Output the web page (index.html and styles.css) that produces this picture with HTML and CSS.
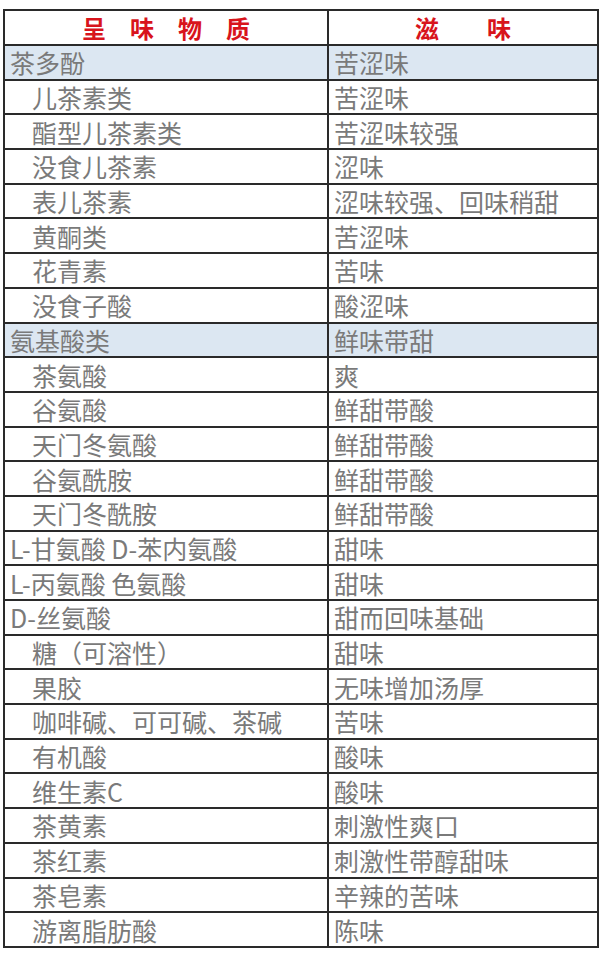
FILE: index.html
```html
<!DOCTYPE html>
<html lang="zh-CN">
<head>
<meta charset="utf-8">
<title>呈味物质与滋味</title>
<link rel="stylesheet" href="styles.css">
</head>
<body>
<div class="wrap">
<table class="taste">
  <colgroup><col class="c1"><col class="c2"></colgroup>
  <thead>
    <tr><th>呈　味　物　质</th><th>滋　　味</th></tr>
  </thead>
  <tbody>
    <tr class="group"><td>茶多酚</td><td>苦涩味</td></tr>
    <tr><td class="ind">儿茶素类</td><td>苦涩味</td></tr>
    <tr><td class="ind">酯型儿茶素类</td><td>苦涩味较强</td></tr>
    <tr><td class="ind">没食儿茶素</td><td>涩味</td></tr>
    <tr><td class="ind">表儿茶素</td><td>涩味较强、回味稍甜</td></tr>
    <tr><td class="ind">黄酮类</td><td>苦涩味</td></tr>
    <tr><td class="ind">花青素</td><td>苦味</td></tr>
    <tr><td class="ind">没食子酸</td><td>酸涩味</td></tr>
    <tr class="group"><td>氨基酸类</td><td>鲜味带甜</td></tr>
    <tr><td class="ind">茶氨酸</td><td>爽</td></tr>
    <tr><td class="ind">谷氨酸</td><td>鲜甜带酸</td></tr>
    <tr><td class="ind">天门冬氨酸</td><td>鲜甜带酸</td></tr>
    <tr><td class="ind">谷氨酰胺</td><td>鲜甜带酸</td></tr>
    <tr><td class="ind">天门冬酰胺</td><td>鲜甜带酸</td></tr>
    <tr><td>L-甘氨酸 D-苯内氨酸</td><td>甜味</td></tr>
    <tr><td>L-丙氨酸 色氨酸</td><td>甜味</td></tr>
    <tr><td>D-丝氨酸</td><td>甜而回味基础</td></tr>
    <tr><td class="ind">糖（可溶性）</td><td>甜味</td></tr>
    <tr><td class="ind">果胶</td><td>无味增加汤厚</td></tr>
    <tr><td class="ind">咖啡碱、可可碱、茶碱</td><td>苦味</td></tr>
    <tr><td class="ind">有机酸</td><td>酸味</td></tr>
    <tr><td class="ind">维生素C</td><td>酸味</td></tr>
    <tr><td class="ind">茶黄素</td><td>刺激性爽口</td></tr>
    <tr><td class="ind">茶红素</td><td>刺激性带醇甜味</td></tr>
    <tr><td class="ind">茶皂素</td><td>辛辣的苦味</td></tr>
    <tr><td class="ind">游离脂肪酸</td><td>陈味</td></tr>
  </tbody>
</table>
</div>
</body>
</html>
```

FILE: styles.css
```css
html, body {
  margin: 0;
  padding: 0;
  background: #ffffff;
}
.wrap {
  padding: 9px 3px 0 3px;
}
.taste {
  width: 594px;
  border-collapse: collapse;
  table-layout: fixed;
  font-family: "Noto Sans CJK SC", "Noto Sans", sans-serif;
  color: #7a7a7a;
  font-size: 25px;
  border: 2px solid #222222;
}
.c1 { width: 324px; }
.c2 { width: 270px; }
.taste th,
.taste td {
  border: 2px solid #2a2a2a;
  padding: 0 0 0 5px;
  text-align: left;
  white-space: nowrap;
  line-height: 28px;
  vertical-align: middle;
}
.taste th {
  height: 33px;
  color: #d8141c;
  font-weight: 700;
  font-size: 24px;
  text-align: center;
  padding: 0;
}
.taste td {
  height: 32.7px;
}
.taste td.ind {
  padding-left: 27px;
}
.taste tr.group td {
  background: #dce7f2;
}
```
